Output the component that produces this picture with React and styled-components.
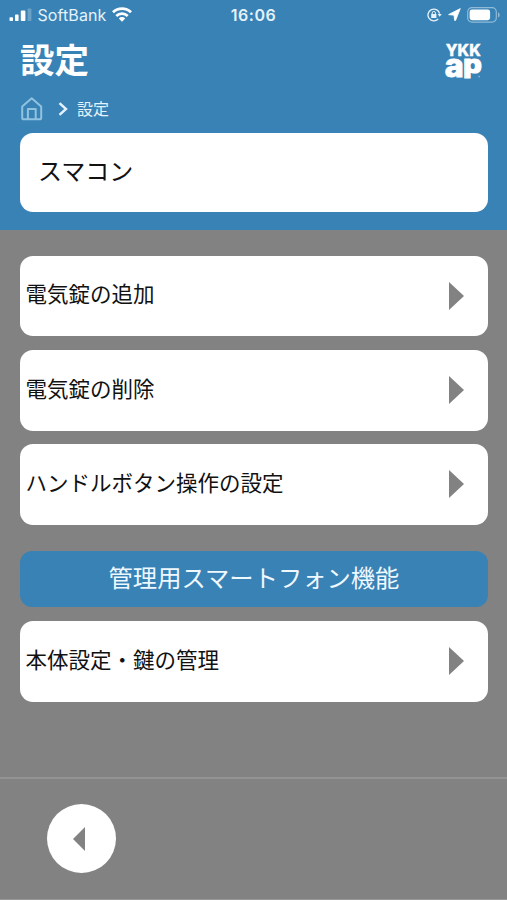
import React from 'react';
import styled, { createGlobalStyle } from 'styled-components';

const BLUE = '#3982b5';
const GRAY = '#828282';

const GlobalStyle = createGlobalStyle`
    * {
        box-sizing: border-box;
    }

    body {
        margin: 0;
        background: ${GRAY};
        font-family: 'Noto Sans CJK JP', sans-serif;
    }
`;

const lockItems = ['電気錠の追加', '電気錠の削除', 'ハンドルボタン操作の設定'];

const SignalIcon = () => (
    <svg width="23" height="14" viewBox="0 0 23 14" fill="#fff">
        <rect x="0.5" y="9.2" width="3.5" height="3.8" rx="0.8" />
        <rect x="6" y="6.6" width="3.6" height="6.4" rx="0.8" />
        <rect x="11.8" y="2.6" width="4.6" height="10.4" rx="0.8" />
        <rect x="18.6" y="0.4" width="3.8" height="12.6" rx="0.8" opacity="0.25" />
    </svg>
);

const WifiIcon = () => (
    <svg width="20" height="15" viewBox="0 0 20 15" fill="none" stroke="#fff" strokeWidth="2.8">
        <path d="M1 5.3a13 13 0 0 1 18 0" />
        <path d="M4.3 9a8.2 8.2 0 0 1 11.4 0" />
        <path d="M6.8 11.4a4.4 4.4 0 0 1 6.4 0L10 14.7z" fill="#fff" stroke="none" />
    </svg>
);

const RotationLockIcon = () => (
    <svg width="15" height="14" viewBox="0 0 15 14" fill="none" stroke="#e4f2fb" strokeWidth="1.3">
        <path d="M12.6 5.6A5.9 5.9 0 1 0 11.2 11" />
        <path d="M10.6 6h4.1l-2 2.7z" fill="#e4f2fb" stroke="none" />
        <rect x="4.2" y="6" width="5.2" height="4" fill="#e4f2fb" stroke="none" />
        <path d="M5.2 6.3V5a1.6 1.6 0 0 1 3.2 0v1.3" strokeWidth="1" />
    </svg>
);

const LocationIcon = () => (
    <svg width="13" height="13" viewBox="0 0 13 13" fill="#fff" stroke="#fff" strokeWidth="0.8" strokeLinejoin="round">
        <path d="M12.3 0.6L0.6 6.6l5.4 0.6 0.6 5.2 1 0z" />
    </svg>
);

const BatteryIcon = () => (
    <svg width="33" height="16" viewBox="0 0 33 16">
        <rect x="0.7" y="0.7" width="28.6" height="14.4" rx="4.2" fill="none" stroke="#8fbbd8" strokeWidth="1.2" />
        <rect x="2.6" y="2.6" width="20.5" height="10.6" rx="2.4" fill="#fff" />
        <path d="M31 5.3q1.7 0.8 1.7 2.6T31 10.5z" fill="#8fbbd8" />
    </svg>
);

const HomeIcon = () => (
    <svg width="22" height="24" viewBox="0 0 22 24" fill="none" stroke="#8fc3df" strokeWidth="2" strokeLinejoin="round">
        <path d="M1.2 9.4L10.7 1.3l9.5 8.1v11.3q0 1.6-1.6 1.6H2.8q-1.6 0-1.6-1.6z" />
        <path d="M6.9 22V12h7.8v10" />
    </svg>
);

const ChevronIcon = () => (
    <svg width="10" height="14" viewBox="0 0 10 14" fill="none" stroke="#e4f2fb" strokeWidth="2.4">
        <path d="M1.5 1.2L8 7l-6.5 5.8" />
    </svg>
);

const BrandLogo = () => (
    <Logo width="38" height="40" viewBox="0 0 38 40">
        <text x="1.8" y="15.8" fontSize="16.5" strokeWidth="0.4" textLength="35" lengthAdjust="spacingAndGlyphs">
            YKK
        </text>
        <text x="0.8" y="37.2" fontSize="32" strokeWidth="0.9" textLength="19" lengthAdjust="spacingAndGlyphs">
            a
        </text>
        <text x="19.2" y="32.6" fontSize="24.5" strokeWidth="1.2" textLength="18.5" lengthAdjust="spacingAndGlyphs">
            p
        </text>
        <circle cx="35.2" cy="36.6" r="0.9" stroke="none" opacity="0.4" />
    </Logo>
);

export default () => (
    <Screen>
        <GlobalStyle />
        <Header>
            <StatusBar>
                <StatusGroup>
                    <SignalIcon />
                    <Carrier>SoftBank</Carrier>
                    <WifiIcon />
                </StatusGroup>
                <Clock>16:06</Clock>
                <StatusGroup end>
                    <RotationLockIcon />
                    <LocationIcon />
                    <BatteryIcon />
                </StatusGroup>
            </StatusBar>
            <TitleRow>
                <Title>設定</Title>
                <BrandLogo />
            </TitleRow>
            <Breadcrumb>
                <HomeIcon />
                <ChevronIcon />
                <span>設定</span>
            </Breadcrumb>
            <DeviceCard>スマコン</DeviceCard>
        </Header>
        <Content>
            {lockItems.map(item => (
                <MenuItem key={item}>
                    <Label>{item}</Label>
                    <Arrow />
                </MenuItem>
            ))}
            <SectionTitle>管理用スマートフォン機能</SectionTitle>
            <MenuItem>
                <Label>本体設定・鍵の管理</Label>
                <Arrow />
            </MenuItem>
        </Content>
        <Footer>
            <BackButton aria-label="戻る">
                <BackArrow />
            </BackButton>
        </Footer>
    </Screen>
);

const Screen = styled.div`
    width: 507px;
    height: 900px;
    display: flex;
    flex-direction: column;
    overflow: hidden;
    background: ${GRAY};
`;

const Header = styled.header`
    height: 230px;
    flex-shrink: 0;
    background: ${BLUE};
    color: white;
`;

const StatusBar = styled.div`
    height: 30px;
    display: grid;
    grid-template-columns: 1fr auto 1fr;
    align-items: center;
    padding: 0 7px 1px 9px;
    font-family: Inter, sans-serif;
`;

const StatusGroup = styled.div.withConfig({ shouldForwardProp: prop => prop !== 'end' })`
    display: flex;
    align-items: center;
    justify-content: ${({ end }) => (end ? 'flex-end' : 'flex-start')};
    gap: ${({ end }) => (end ? '6px' : '5.5px')};
`;

const Carrier = styled.span`
    font-size: 16px;
    line-height: 20px;
    letter-spacing: 0.1px;
    color: #e4f2fb;
`;

const Clock = styled.span`
    margin-left: -2px;
    font-size: 16px;
    line-height: 20px;
    font-weight: 600;
    letter-spacing: 0.5px;
    color: #e4f2fb;
`;

const TitleRow = styled.div`
    height: 60px;
    display: flex;
    align-items: center;
    justify-content: space-between;
    padding: 0 25px 0 20px;
`;

const Title = styled.h1`
    margin: 0;
    padding-bottom: 4px;
    font-size: 34.5px;
    line-height: 56px;
    font-weight: 700;
`;

const Logo = styled.svg`
    overflow: visible;
    fill: white;
    stroke: white;
    font-family: Inter, sans-serif;
    font-weight: 800;
`;

const Breadcrumb = styled.div`
    height: 43px;
    display: flex;
    align-items: center;
    padding: 0 21px 6px;
    font-size: 16px;
    color: #e4f2fb;

    svg + svg {
        margin: 0 9px 0 15px;
    }

    span {
        padding-bottom: 2px;
    }
`;

const Card = styled.div`
    display: flex;
    align-items: center;
    background: white;
    color: #111111;
    border-radius: 13px;
`;

const DeviceCard = styled(Card)`
    height: 79px;
    margin: 0 19px 0 20px;
    padding: 0 18px 6px;
    font-size: 24px;
`;

const Content = styled.main`
    flex: 1;
    display: flex;
    flex-direction: column;
    gap: 13.5px;
    padding: 25.5px 19px 0 20px;
`;

const MenuItem = styled(Card)`
    height: 80.8px;
    justify-content: space-between;
    padding: 0 24px 0 5.5px;
`;

const Label = styled.span`
    padding-bottom: 5px;
    font-size: 21.5px;
    line-height: 32px;
`;

const Arrow = styled.span`
    border-left: 15px solid ${GRAY};
    border-top: 14px solid transparent;
    border-bottom: 14px solid transparent;
`;

const SectionTitle = styled.h2`
    height: 56.5px;
    margin: 12.5px 0 0;
    padding-bottom: 5px;
    display: flex;
    align-items: center;
    justify-content: center;
    border-radius: 12px;
    background: ${BLUE};
    color: #eef8ff;
    font-size: 24.3px;
    font-weight: 400;
`;

const Footer = styled.footer`
    height: 123px;
    flex-shrink: 0;
    padding: 25px 0 0 46.5px;
    border-top: 2px solid #939393;
    border-bottom: 1px solid #989898;
`;

const BackButton = styled.button`
    width: 69px;
    height: 69px;
    display: flex;
    align-items: center;
    justify-content: center;
    padding: 0 4px 0 0;
    border: none;
    border-radius: 50%;
    background: white;
`;

const BackArrow = styled.span`
    border-right: 12.5px solid ${GRAY};
    border-top: 12px solid transparent;
    border-bottom: 12px solid transparent;
`;
